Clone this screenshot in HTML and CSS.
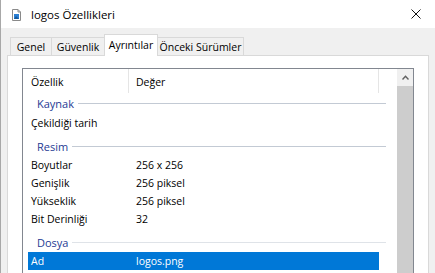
FILE: index.html
```html
<!DOCTYPE html>
<html lang="tr">
<head>
<meta charset="utf-8">
<title>logos Özellikleri</title>
<link rel="stylesheet" href="styles.css">
</head>
<body>
<div class="window">
  <div class="titlebar">
    <svg class="app-icon" width="9" height="12" viewBox="0 0 9 12">
      <path d="M0.5 0.5 H6 L8.5 3 V11.5 H0.5 Z" fill="#fff" stroke="#8a8a8a"/>
      <path d="M6 0.5 V3 H8.5" fill="none" stroke="#8a8a8a"/>
      <rect x="2" y="5" width="5" height="5" fill="#2a7fd4"/>
      <path d="M2 10 L4 7 L7 10 Z" fill="#155a9c"/>
    </svg>
    <span class="title">logos Özellikleri</span>
    <svg class="close" width="10" height="10" viewBox="0 0 10 10">
      <path d="M0.5 0.5 L9.5 9.5 M9.5 0.5 L0.5 9.5" stroke="#111" stroke-width="1" fill="none"/>
    </svg>
  </div>
  <div class="tabs">
    <div class="tab tab-genel">Genel</div>
    <div class="tab tab-guvenlik">Güvenlik</div>
    <div class="tab tab-ayrinti selected">Ayrıntılar</div>
    <div class="tab tab-onceki">Önceki Sürümler</div>
  </div>
  <div class="panel">
    <div class="listview">
      <div class="list-body">
        <div class="header">
          <div class="hcell hc1">Özellik</div>
          <div class="hcell hc2">Değer</div>
        </div>
        <div class="group first"><span class="gname">Kaynak</span><span class="gline"></span></div>
        <div class="row"><span class="c1">Çekildiği tarih</span><span class="c2"></span></div>
        <div class="group"><span class="gname">Resim</span><span class="gline"></span></div>
        <div class="row"><span class="c1">Boyutlar</span><span class="c2">256 x 256</span></div>
        <div class="row"><span class="c1">Genişlik</span><span class="c2">256 piksel</span></div>
        <div class="row"><span class="c1">Yükseklik</span><span class="c2">256 piksel</span></div>
        <div class="row"><span class="c1">Bit Derinliği</span><span class="c2">32</span></div>
        <div class="group"><span class="gname">Dosya</span><span class="gline light"></span></div>
        <div class="row selected"><span class="c1">Ad</span><span class="c2">logos.png</span></div>
      </div>
      <div class="scrollbar">
        <div class="sb-arrow">
          <svg width="7" height="5" viewBox="0 0 7 5"><path d="M0.5 4.5 L3.5 1.2 L6.5 4.5" fill="none" stroke="#606060" stroke-width="1.4"/></svg>
        </div>
        <div class="sb-thumb"></div>
      </div>
    </div>
  </div>
</div>
</body>
</html>
```

FILE: styles.css
```css
* { box-sizing: border-box; }

html, body {
  margin: 0;
  padding: 0;
}

body {
  width: 435px;
  height: 273px;
  overflow: hidden;
  background: #f0f0f0;
  font-family: "Open Sans", "Liberation Sans", sans-serif;
  font-size: 10.5px;
  color: #000;
}

.window {
  height: 273px;
  border-left: 1px solid #a8a8a8;
  overflow: hidden;
}

.titlebar {
  height: 28px;
  background: #fff;
  display: flex;
  align-items: center;
}

.app-icon {
  margin-left: 11px;
  margin-top: 1px;
  flex: none;
}

.title {
  margin-left: 10px;
  font-size: 11.5px;
}

.close {
  margin-left: auto;
  margin-right: 14px;
}

.tabs {
  display: flex;
  align-items: flex-end;
  height: 21px;
  margin-top: 6px;
  padding-left: 9px;
}

.tab {
  height: 18px;
  border: 1px solid #d9d9d9;
  border-bottom: none;
  background: #f0f0f0;
  display: flex;
  align-items: center;
  justify-content: center;
  white-space: nowrap;
}

.tab + .tab { margin-left: -1px; }

.tab-genel { width: 42px; }
.tab-guvenlik { width: 54px; }
.tab-ayrinti { width: 54px; }
.tab-onceki { width: 87px; }

.tab.selected {
  height: 22px;
  margin-bottom: -1px;
  background: #fff;
  position: relative;
  z-index: 1;
  padding-bottom: 2px;
}

.panel {
  margin-left: 6px;
  width: 422px;
  height: 240px;
  background: #fff;
  border: 1px solid #d9d9d9;
  padding: 12px 0 0 14px;
}

.listview {
  width: 392px;
  height: 230px;
  border: 1px solid #828790;
  display: flex;
  overflow: hidden;
}

.list-body {
  width: 374px;
  flex: none;
}

.header {
  height: 24px;
  display: flex;
}

.hcell {
  display: flex;
  align-items: center;
  border-right: 1px solid #e5e5e5;
  padding-top: 1px;
}

.hc1 { width: 106px; padding-left: 8px; }
.hc2 { width: 250px; padding-left: 7px; }

.group {
  height: 24px;
  margin: 0 11px 0 5px;
  padding: 5px 0 0 9px;
  display: flex;
  align-items: center;
  color: #1e3a94;
  font-size: 11px;
}

.group.first {
  height: 21px;
  padding-top: 0;
}

.gline {
  flex: 1;
  height: 1px;
  margin-left: 4px;
  background: #c3cad4;
}

.gline.light { background: #dfe3e8; }

.row {
  height: 18px;
  margin: 0 18px 0 5px;
  display: flex;
  align-items: center;
  white-space: nowrap;
}

.row .c1 { width: 105px; padding-left: 3px; flex: none; }
.row .c2 { padding-left: 3px; }

.row.selected {
  background: #0078d7;
  color: #fff;
}

.scrollbar {
  width: 16px;
  flex: none;
  background: #f0f0f0;
}

.sb-arrow {
  height: 17px;
  display: flex;
  align-items: center;
  justify-content: center;
}

.sb-thumb {
  height: 300px;
  background: #cdcdcd;
}
```
